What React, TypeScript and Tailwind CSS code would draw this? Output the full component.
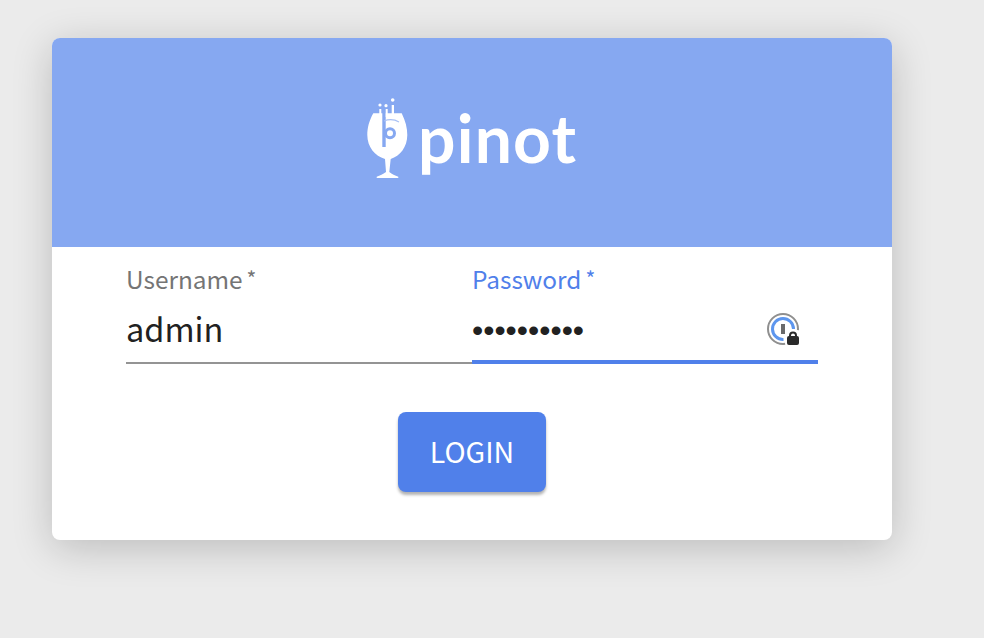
export default function App() {
  return (
    <div className="h-[638px] w-[984px] overflow-hidden bg-[#ebebeb] pl-[52px] pt-[38px] font-['Noto_Sans_CJK_SC','Noto_Sans',sans-serif] antialiased">
      <div className="flex h-[502px] w-[840px] flex-col overflow-hidden rounded-[8px] bg-white shadow-[0_8px_40px_rgba(0,0,0,0.2)]">
        <div className="flex h-[209px] items-start justify-center bg-[#86a8f1] pt-[57px]">
          <svg width="54" height="86" viewBox="0 0 54 86" className="shrink-0">
            <path d="M11.3 18.3 C7 26 5.3 33 5.3 40 C5.3 52 13 61 23 64 L24 77 C21 79.5 18 80.5 14.7 81.7 L14.7 83 L36.3 83 L36.3 81.7 C33 80.5 30 79.5 27.3 77 L28.7 64 C38 61 45.3 52 45.3 40 C45.3 33 43.5 26 39.7 18.3 L32 18.3 L32 10 L29.7 10 L29.7 18.3 Z" fill="#fff" />
            <rect x="20.3" y="17" width="3.4" height="35" fill="#86a8f1" />
            <path d="M22 26 C27 24 32 24 37 27" stroke="#a9c1f5" strokeWidth="1.2" fill="none" />
            <circle cx="28" cy="38.3" r="4.5" fill="#fff" stroke="#86a8f1" strokeWidth="3" />
            <circle cx="18" cy="10" r="1.6" fill="#fff" />
            <circle cx="24" cy="10.7" r="1.6" fill="#fff" />
            <circle cx="30.7" cy="5" r="1.8" fill="#fff" />
            <rect x="17.3" y="14" width="2" height="7" fill="#fff" />
            <rect x="23.7" y="14" width="2" height="8" fill="#fff" />
          </svg>
          <span className="w-[166px] pl-[2px] font-['Lato',sans-serif] text-[66px] font-bold leading-[86px] tracking-[1.2px] text-white">pinot</span>
        </div>
        <div className="flex flex-1 flex-col items-center px-[74px]">
          <div className="flex w-full">
            <label className="flex w-1/2 flex-col">
              <span className="mt-[15px] h-[34px] text-[24.4px] leading-[34px] text-[#757575]">Username<span className="relative top-[-2px] ml-[4px] text-[21px]">*</span></span>
              <div className="flex h-[68px] items-start border-b-2 border-[#949494]">
                <input readOnly value="admin" className="mt-[8px] w-full bg-transparent text-[32.5px] leading-[48px] text-[#212121] outline-none" />
              </div>
            </label>
            <label className="flex w-1/2 flex-col">
              <span className="mt-[15px] h-[34px] text-[24.4px] leading-[34px] text-[#5080ea]">Password<span className="relative top-[-2px] ml-[4px] text-[21px]">*</span></span>
              <div className="relative flex h-[68px] items-start border-b-4 border-[#5080ea]">
                <input readOnly type="password" value="adminadmin" className="mt-[10px] w-full bg-transparent font-['Liberation_Sans',sans-serif] text-[32px] leading-[48px] text-[#212121] outline-none" />
                <svg width="34" height="34" viewBox="0 0 34 34" className="absolute right-[17px] top-[17px]">
                  <circle cx="16" cy="16" r="15" fill="none" stroke="#8f8f8f" strokeWidth="2" />
                  <path d="M16.5 26.5 A10.5 10.5 0 1 1 26.5 16" fill="none" stroke="#5d96ee" strokeWidth="3" />
                  <rect x="14" y="11" width="4" height="10" fill="#6a6a6a" />
                  <rect x="18" y="17" width="16" height="17" rx="4" fill="#fff" />
                  <path d="M23 24 V22.5 a3 3 0 0 1 6 0 V24" fill="none" stroke="#2a2a2a" strokeWidth="2" />
                  <rect x="20" y="23" width="12" height="9" rx="2" fill="#2a2a2a" />
                </svg>
              </div>
            </label>
          </div>
          <button className="mt-[48px] h-[80px] w-[148px] rounded-[8px] bg-[#5080ea] pb-[2px] text-[28.5px] text-white shadow-[0_3px_3px_rgba(0,0,0,0.3)]">LOGIN</button>
        </div>
      </div>
    </div>
  );
}
